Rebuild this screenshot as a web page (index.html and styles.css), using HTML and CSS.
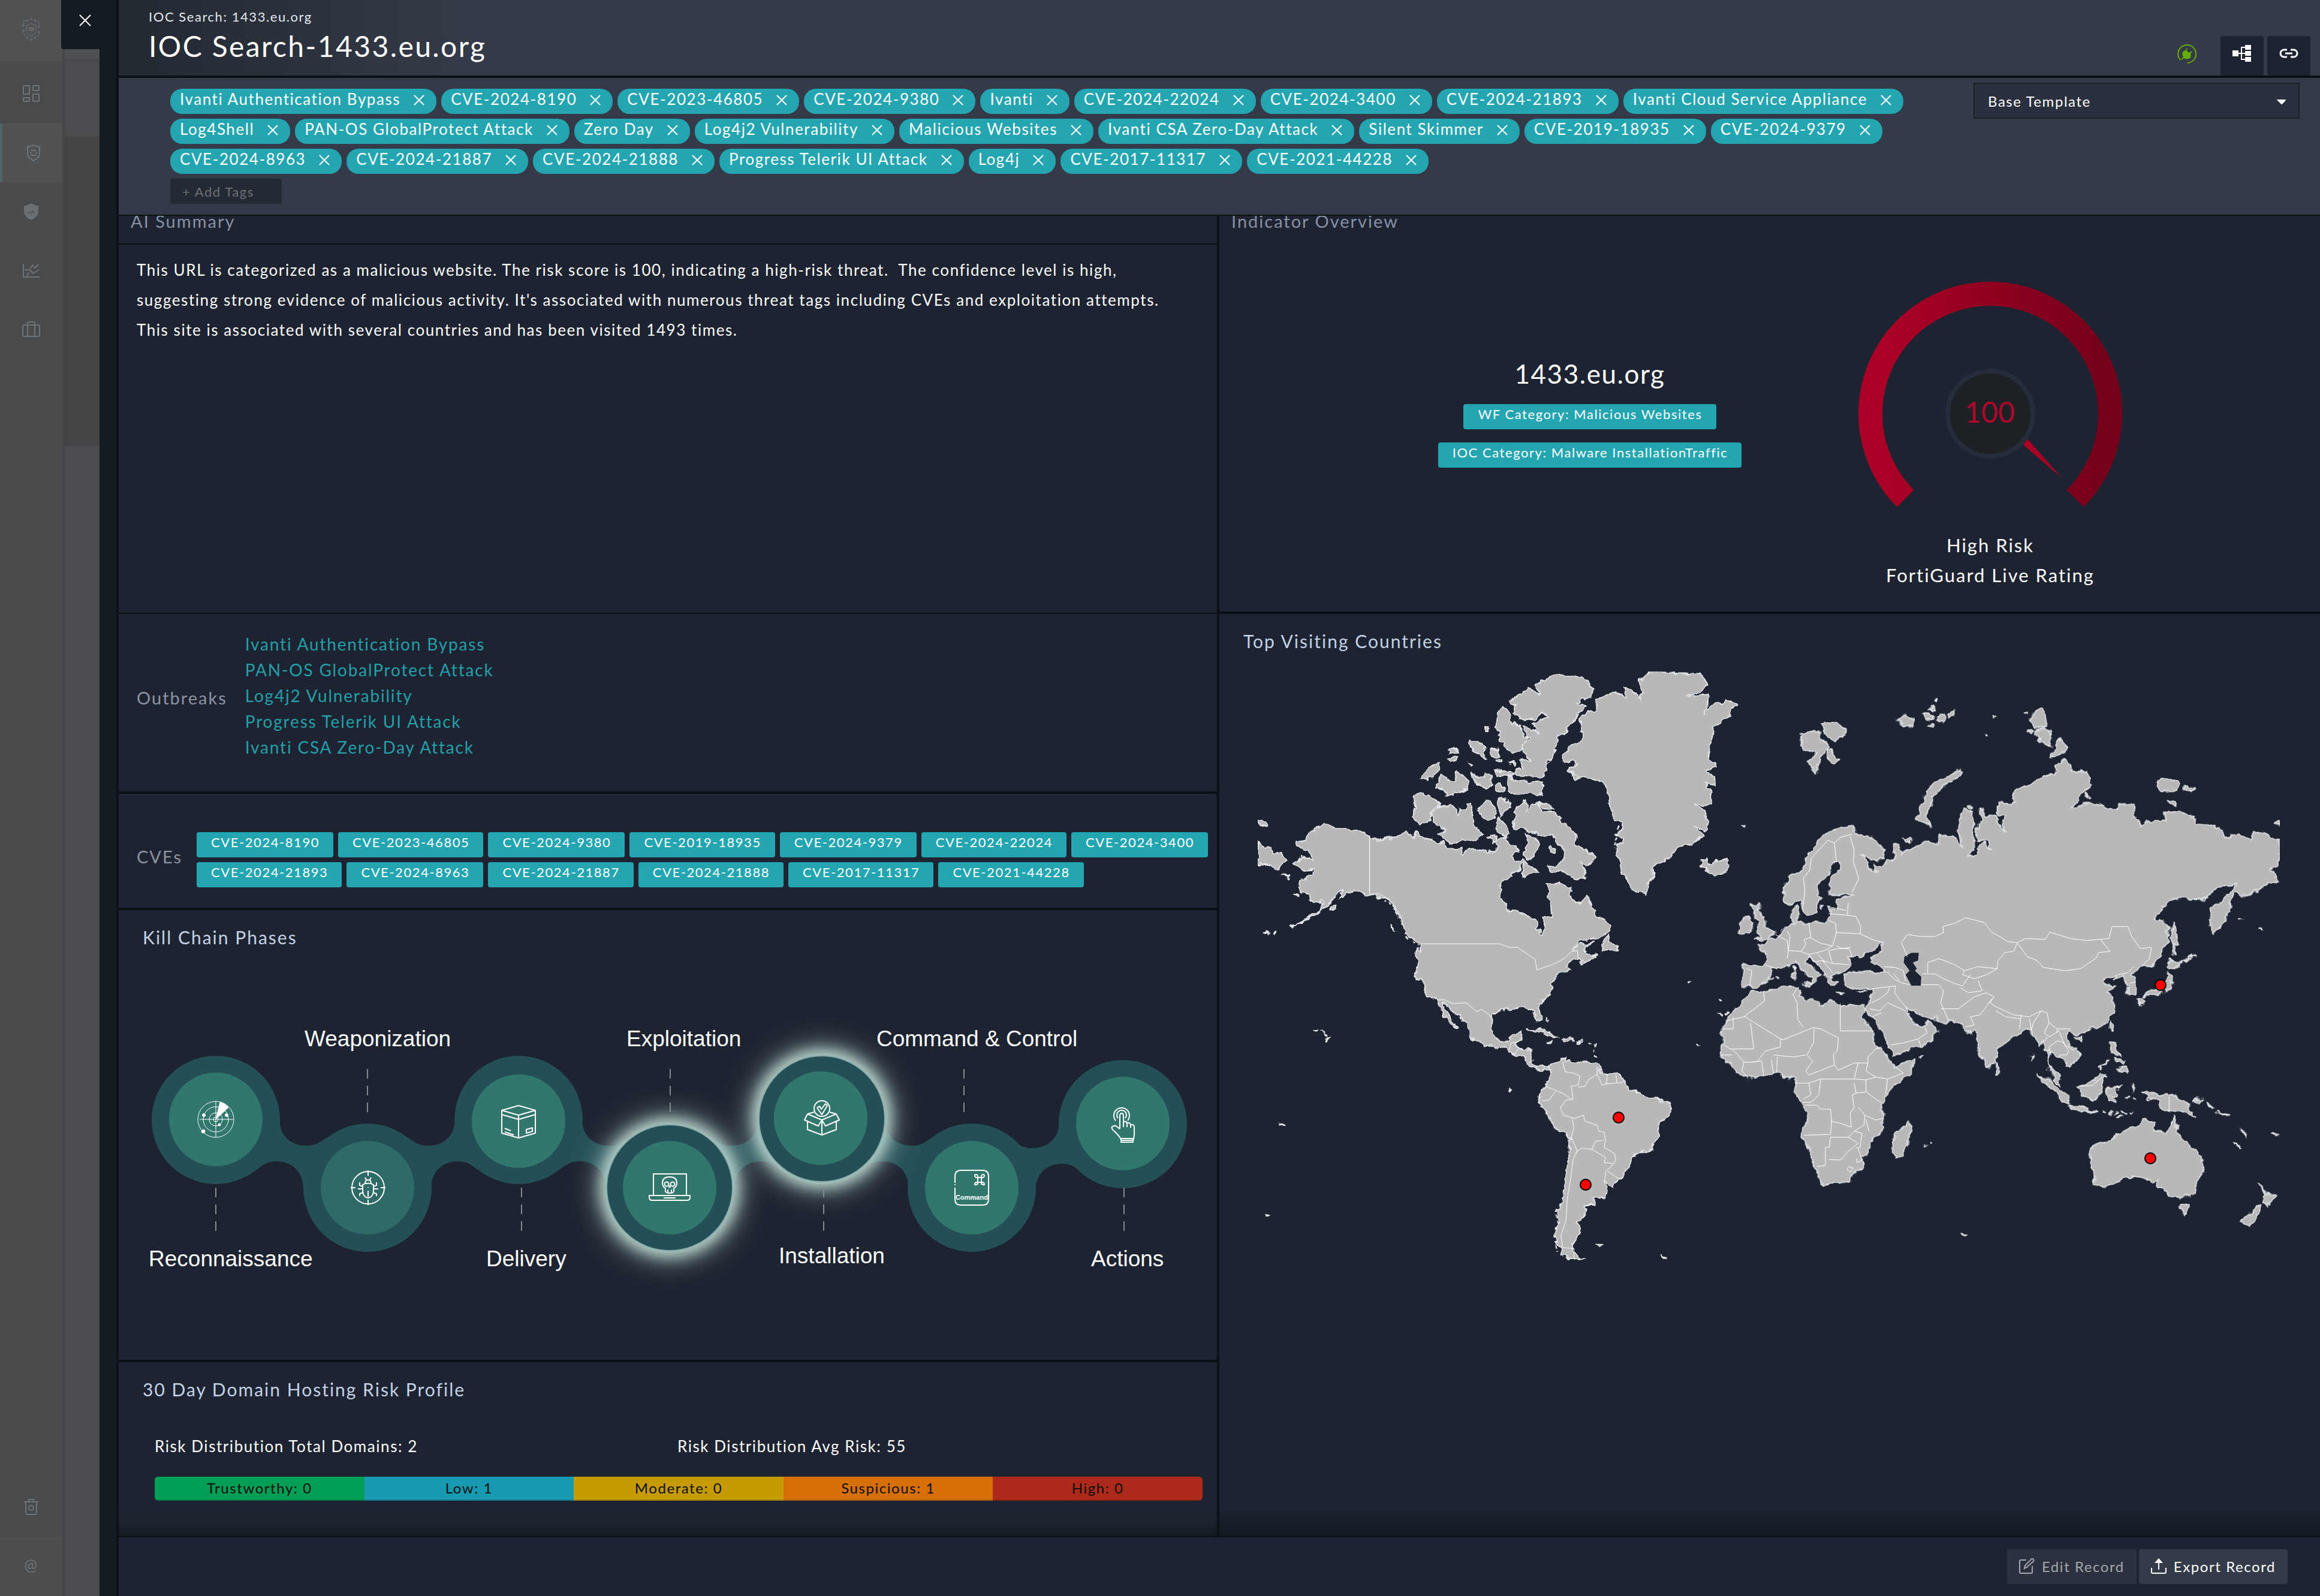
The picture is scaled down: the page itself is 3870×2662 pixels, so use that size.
FILE: index.html
```html
<!DOCTYPE html>
<html lang="en">
<head>
<meta charset="utf-8">
<title>IOC Search: 1433.eu.org</title>
<link rel="stylesheet" href="styles.css">
</head>
<body>
<div class="app">
  <nav class="rail" aria-label="Main">
    <a class="rail-item rail-logo" href="#" aria-label="Home">
      <svg class="rail-icon" viewBox="0 0 30 38"><path d="M15 9c3 2 5 2.600 8 3v9c0 4-3 7-8 9-5-2-8-5-8-9v-9c3-.4 5-1 8-3z"/><path d="M2 11V6l7-2M21 4l7 2v8M2 22c1 6 3 9 7 11M28 24c-1 5-3 7-7 9M11 16h8v5h-8zM11 18.500h8M13.500 16v5M16.500 16v5"/><g class="dots"><circle cx="15" cy="1.800" r="1.800"/><circle cx="9" cy="4" r="1.800"/><circle cx="21" cy="4" r="1.800"/><circle cx="2" cy="13" r="1.800"/><circle cx="2" cy="21" r="1.800"/><circle cx="28" cy="15" r="1.800"/><circle cx="28" cy="24" r="1.800"/><circle cx="9" cy="33" r="1.800"/><circle cx="21" cy="33" r="1.800"/><circle cx="15" cy="36" r="1.800"/></g></svg>
    </a>
    <a class="rail-item" href="#" aria-label="Dashboard">
      <svg class="rail-icon" viewBox="0 0 30 30"><g class="wide"><rect x="2" y="2" width="10" height="14" rx="1"/><rect x="18" y="2" width="10" height="8" rx="1"/><rect x="2" y="22" width="10" height="6" rx="1"/><rect x="18" y="16" width="10" height="12" rx="1"/></g></svg>
    </a>
    <a class="rail-item rail-active" href="#" aria-label="Threat intelligence">
      <svg class="rail-icon" viewBox="0 0 30 30"><path class="wide" d="M15 2c4 2 6 2.600 10 3v11c0 6-4 9-10 12C9 25 5 22 5 16V5c4-.4 6-1 10-3z"/><path class="wide" d="M10 11h3M17 11h3M9 15h3M18 15h3M10 19h3M17 19h3M13 11h4M13 19h4"/></svg>
    </a>
    <a class="rail-item" href="#" aria-label="Incidents">
      <svg class="rail-icon" viewBox="0 0 30 30"><path class="solid" d="M15 1c4 2.500 8 3.500 12 4v9c0 7-5 12-12 15C8 26 3 21 3 14V5c4-.5 8-1.500 12-4z"/><path class="pulse" d="M8 17h4l1.500-2 2 5 2-7 2 4H22"/></svg>
    </a>
    <a class="rail-item" href="#" aria-label="Reports">
      <svg class="rail-icon" viewBox="0 0 30 30"><path class="wide" d="M2 4v22h27M4 14h9l5 6 10-6M13 12l4-6 4 5 6-6M8 24l3-6"/></svg>
    </a>
    <a class="rail-item" href="#" aria-label="Resources">
      <svg class="rail-icon" viewBox="0 0 30 30"><g class="wide"><rect x="1" y="8" width="28" height="19" rx="2"/><path d="M9 27V5q0-2 2-2h8q2 0 2 2v22"/></g></svg>
    </a>
    <div class="rail-space"></div>
    <a class="rail-item" href="#" aria-label="Recycle bin">
      <svg class="rail-icon" viewBox="0 0 30 30"><g class="wide"><path d="M3 7h24M11 7V3h8v4M6 7v18q0 3 3 3h12q3 0 3-3V7"/><circle cx="15" cy="17" r="4"/></g></svg>
    </a>
    <a class="rail-item rail-last" href="#" aria-label="Help">@</a>
  </nav>
  <div class="under"><div class="under-top"></div><div class="under-bar"></div><div class="under-body"></div></div>

  <div class="drawer">
    <button class="close" type="button" aria-label="Close"><svg viewBox="0 0 20 20"><path d="M1 1l18 18M19 1L1 19"/></svg></button>
    <main class="record">
      <header class="head">
        <div class="head-text">
          <p class="crumb">IOC Search: 1433.eu.org</p>
          <h1 class="title">IOC Search-1433.eu.org</h1>
        </div>
        <div class="head-tools">
          <svg class="plug" viewBox="0 0 32 32"><path class="ring" d="M5 26A15 15 0 1 1 17 31"/><path class="body" d="M6 25l4-4c-3-5-2-9 3-11l3-4 1 1-2 3 5 4 4-3 1 1-3 4c2 5-1 9-6 8-2 1-4 0-5-1l-4 3z"/></svg>
          <button class="tool" type="button" aria-label="Relationships"><svg viewBox="0 0 32 28"><path class="fill" d="M0 9h10v10H0zM21 0h10v8H21zM21 10h10v8H21zM21 20h10v8H21z"/><path d="M10 14h12M15 4v20M14 4h8M14 24h8"/></svg></button>
          <button class="tool" type="button" aria-label="Copy link"><svg viewBox="0 0 32 28"><path class="thick" d="M13 8H8a6 6 0 0 0 0 12h5M19 8h5a6 6 0 0 1 0 12h-5M10 14h12"/></svg></button>
        </div>
      </header>

      <section class="tagbar">
        <div class="tag-area">
          <div class="tags">
          <span class="tag">Ivanti Authentication Bypass<button type="button" aria-label="Remove"><svg viewBox="0 0 18 18"><path d="M1 1l16 16M17 1L1 17"/></svg></button></span>
          <span class="tag">CVE-2024-8190<button type="button" aria-label="Remove"><svg viewBox="0 0 18 18"><path d="M1 1l16 16M17 1L1 17"/></svg></button></span>
          <span class="tag">CVE-2023-46805<button type="button" aria-label="Remove"><svg viewBox="0 0 18 18"><path d="M1 1l16 16M17 1L1 17"/></svg></button></span>
          <span class="tag">CVE-2024-9380<button type="button" aria-label="Remove"><svg viewBox="0 0 18 18"><path d="M1 1l16 16M17 1L1 17"/></svg></button></span>
          <span class="tag">Ivanti<button type="button" aria-label="Remove"><svg viewBox="0 0 18 18"><path d="M1 1l16 16M17 1L1 17"/></svg></button></span>
          <span class="tag">CVE-2024-22024<button type="button" aria-label="Remove"><svg viewBox="0 0 18 18"><path d="M1 1l16 16M17 1L1 17"/></svg></button></span>
          <span class="tag">CVE-2024-3400<button type="button" aria-label="Remove"><svg viewBox="0 0 18 18"><path d="M1 1l16 16M17 1L1 17"/></svg></button></span>
          <span class="tag">CVE-2024-21893<button type="button" aria-label="Remove"><svg viewBox="0 0 18 18"><path d="M1 1l16 16M17 1L1 17"/></svg></button></span>
          <span class="tag">Ivanti Cloud Service Appliance<button type="button" aria-label="Remove"><svg viewBox="0 0 18 18"><path d="M1 1l16 16M17 1L1 17"/></svg></button></span>
          <span class="tag">Log4Shell<button type="button" aria-label="Remove"><svg viewBox="0 0 18 18"><path d="M1 1l16 16M17 1L1 17"/></svg></button></span>
          <span class="tag">PAN-OS GlobalProtect Attack<button type="button" aria-label="Remove"><svg viewBox="0 0 18 18"><path d="M1 1l16 16M17 1L1 17"/></svg></button></span>
          <span class="tag">Zero Day<button type="button" aria-label="Remove"><svg viewBox="0 0 18 18"><path d="M1 1l16 16M17 1L1 17"/></svg></button></span>
          <span class="tag">Log4j2 Vulnerability<button type="button" aria-label="Remove"><svg viewBox="0 0 18 18"><path d="M1 1l16 16M17 1L1 17"/></svg></button></span>
          <span class="tag">Malicious Websites<button type="button" aria-label="Remove"><svg viewBox="0 0 18 18"><path d="M1 1l16 16M17 1L1 17"/></svg></button></span>
          <span class="tag">Ivanti CSA Zero-Day Attack<button type="button" aria-label="Remove"><svg viewBox="0 0 18 18"><path d="M1 1l16 16M17 1L1 17"/></svg></button></span>
          <span class="tag">Silent Skimmer<button type="button" aria-label="Remove"><svg viewBox="0 0 18 18"><path d="M1 1l16 16M17 1L1 17"/></svg></button></span>
          <span class="tag">CVE-2019-18935<button type="button" aria-label="Remove"><svg viewBox="0 0 18 18"><path d="M1 1l16 16M17 1L1 17"/></svg></button></span>
          <span class="tag">CVE-2024-9379<button type="button" aria-label="Remove"><svg viewBox="0 0 18 18"><path d="M1 1l16 16M17 1L1 17"/></svg></button></span>
          <span class="tag">CVE-2024-8963<button type="button" aria-label="Remove"><svg viewBox="0 0 18 18"><path d="M1 1l16 16M17 1L1 17"/></svg></button></span>
          <span class="tag">CVE-2024-21887<button type="button" aria-label="Remove"><svg viewBox="0 0 18 18"><path d="M1 1l16 16M17 1L1 17"/></svg></button></span>
          <span class="tag">CVE-2024-21888<button type="button" aria-label="Remove"><svg viewBox="0 0 18 18"><path d="M1 1l16 16M17 1L1 17"/></svg></button></span>
          <span class="tag">Progress Telerik UI Attack<button type="button" aria-label="Remove"><svg viewBox="0 0 18 18"><path d="M1 1l16 16M17 1L1 17"/></svg></button></span>
          <span class="tag">Log4j<button type="button" aria-label="Remove"><svg viewBox="0 0 18 18"><path d="M1 1l16 16M17 1L1 17"/></svg></button></span>
          <span class="tag">CVE-2017-11317<button type="button" aria-label="Remove"><svg viewBox="0 0 18 18"><path d="M1 1l16 16M17 1L1 17"/></svg></button></span>
          <span class="tag">CVE-2021-44228<button type="button" aria-label="Remove"><svg viewBox="0 0 18 18"><path d="M1 1l16 16M17 1L1 17"/></svg></button></span>
          </div>
          <input class="add-tag" type="text" placeholder="+ Add Tags" aria-label="Add tags">
        </div>
        <div class="template">
          <select class="template-select" aria-label="Template"><option>Base Template</option></select>
        </div>
      </section>

      <div class="content">
        <div class="col col-left">
          <section class="panel summary">
            <h2 class="panel-head">AI Summary</h2>
            <p class="summary-text">This URL is categorized as a malicious website. The risk score is 100, indicating a high-risk threat.&nbsp; The confidence level is high, suggesting strong evidence of malicious activity. It's associated with numerous threat tags including CVEs and exploitation attempts. This site is associated with several countries and has been visited 1493 times.</p>
          </section>
          <section class="panel outbreaks">
            <h2 class="field-label">Outbreaks</h2>
            <ul class="links">
              <li><a href="#">Ivanti Authentication Bypass</a></li>
              <li><a href="#">PAN-OS GlobalProtect Attack</a></li>
              <li><a href="#">Log4j2 Vulnerability</a></li>
              <li><a href="#">Progress Telerik UI Attack</a></li>
              <li><a href="#">Ivanti CSA Zero-Day Attack</a></li>
            </ul>
          </section>
          <section class="panel cves">
            <h2 class="field-label">CVEs</h2>
            <div class="badges">
              <span class="badge">CVE-2024-8190</span><span class="badge">CVE-2023-46805</span><span class="badge">CVE-2024-9380</span><span class="badge">CVE-2019-18935</span><span class="badge">CVE-2024-9379</span><span class="badge">CVE-2024-22024</span><span class="badge">CVE-2024-3400</span><span class="badge">CVE-2024-21893</span><span class="badge">CVE-2024-8963</span><span class="badge">CVE-2024-21887</span><span class="badge">CVE-2024-21888</span><span class="badge">CVE-2017-11317</span><span class="badge">CVE-2021-44228</span>
            </div>
          </section>
          <section class="panel chain">
            <h2 class="section-title">Kill Chain Phases</h2>
            <svg class="chain-art" viewBox="198 1614 1832 654">
              <defs>
                <filter id="far" x="-60%" y="-60%" width="220%" height="220%"><feGaussianBlur stdDeviation="26"/></filter>
                <filter id="near" x="-40%" y="-40%" width="180%" height="180%"><feGaussianBlur stdDeviation="11"/></filter>
                <path id="joint" d="M106 0C107 26 124 43 152 43C170 43 178 32 185 30L253 60L146 113C145 87 128 69 101 69C86 69 77 76 68 83L0 60Z"/>
              </defs>
              <g class="outer">
                <circle cx="360" cy="1868" r="107"/><circle cx="613" cy="1981" r="107"/><circle cx="865" cy="1868" r="107"/><circle cx="1621" cy="1981" r="107"/><circle cx="1873" cy="1875" r="107"/>
                <circle cx="1117" cy="1981" r="107"/><circle cx="1371" cy="1868" r="107"/>
                <use href="#joint" x="360" y="1868"/><use href="#joint" transform="translate(865 1868) scale(-1 1)"/>
                <use href="#joint" x="865" y="1868"/><use href="#joint" transform="translate(1371 1868) scale(-1 1)"/>
                <use href="#joint" x="1370" y="1868"/><use href="#joint" transform="translate(1873 1872) scale(-1 1)"/>
              </g>
              <g class="glow">
                <circle cx="1117" cy="1981" r="112" filter="url(#far)"/><circle cx="1371" cy="1866" r="112" filter="url(#far)"/>
                <circle cx="1117" cy="1981" r="113" filter="url(#near)"/><circle cx="1371" cy="1866" r="113" filter="url(#near)"/>
              </g>
              <g class="outer lit"><circle cx="1117" cy="1981" r="105"/><circle cx="1371" cy="1866" r="105"/></g>
              <g class="inner">
                <circle cx="360" cy="1867" r="78"/><circle class="dim" cx="613" cy="1981" r="78"/><circle cx="865" cy="1870" r="78"/><circle cx="1117" cy="1981" r="78"/><circle cx="1369" cy="1865" r="78"/><circle cx="1621" cy="1981" r="78"/><circle cx="1873" cy="1874" r="78"/>
              </g>
              <g class="dash"><path d="M613 1783v72M1118 1783v72M1608 1783v72M360 1981v72M870 1981v72M1374 1981v72M1875 1981v72"/></g>
              <g class="art-icon thin" transform="translate(360 1867)"><circle r="30"/><circle r="21"/><circle r="11"/><circle r="4"/><path d="M-27 0H29M0-30V30"/><path class="solid" d="M0 0L7-29Q15-26 21-20Z"/><g class="solid"><circle cx="-20" cy="-7" r="2.500"/><circle cx="18" cy="-7" r="2.500"/><circle cx="-21" cy="20" r="3"/><circle cx="6" cy="9" r="2"/></g></g>
              <g class="art-icon" transform="translate(614 1981)"><circle r="27"/><path d="M0-29v9M0 29v-9M-29 0h8M29 0h-8"/><path d="M-9-5q9-5 18 0v11q-1 10-9 11q-8-1-9-11zM-5-7q0-6 5-6t5 6M-3-13l-2-4M3-13l2-4M0-1v1M0 5v10M-9 2h-8M9 2h8M-9-2l-5-2v-5M9-2l5-2v-5M-8 8l-6 2v4M8 8l6 2v4"/></g>
              <g class="art-icon" transform="translate(865 1870)"><path d="M-28-18L0-26 28-18V20L0 28-28 20ZM-28-18L0-10 28-18M-28-11L0-3 28-11M0-10V28M-23 12l10 4M-23 18l15 5M13 14l10-3v6l-10 3z"/></g>
              <g class="art-icon" transform="translate(1117 1981)"><path d="M-27 12V-23H28V12M-34 13H34V16q0 5-5 5H-29q-5 0-5-5zM-10 17H10"/><path d="M-7 1q-5-3-5-9 0-10 12-10t12 10q0 6-5 9v5q-1 3-7 3t-7-3zM-3 3v6M3 3v6M-1-1l1-2 1 2z"/><circle cx="-5" cy="-6" r="3.500"/><circle cx="5" cy="-6" r="3.500"/></g>
              <g class="art-icon" transform="translate(1371 1865)"><circle cy="-16" r="13"/><path d="M-8-17l4-3 3 5 7-9 3 3-9 15z"/><path d="M-24-7L-13-10M24-7L13-10M-24-7L0 3 24-7M-24-7l-5 10 23 10 6-10 6 10 23-10-5-10M-24 6v13L0 28 24 19V6M0 3v25"/></g>
              <g class="art-icon" transform="translate(1621 1981)"><path d="M-28-8V-19q0-10 10-10H18q10 0 10 10V19q0 10-10 10H-18q-10 0-10-10V0M-28-6v2"/><path d="M10-17h6v8h-6zM10-17h-3q-2-1-2-3t2-2 3 2zM16-17h3q2-1 2-3t-2-2-3 2zM10-9h-3q-2 1-2 3t2 1 3-1zM16-9h3q2 1 2 3t-2 1-3-1z"/><text class="key-text" x="0" y="20" text-anchor="middle">Command</text></g>
              <g class="art-icon" transform="translate(1871 1875)"><path d="M-10-6a13 13 0 1 1 20 0M-6-10a8 8 0 1 1 12 0"/><path d="M-3 8V-14q0-4 3-4t3 4V-3M3 5V-4q5-2 6 3V5M9 5V-2q6-1 6 4V6M15 1q6-1 6 4V17q0 6-2 10H0Q-5 18-12 12-19 6-15 4-12 1-8 4l5 4M-1 24H19v6H-1z"/></g>
              <g class="art-label">
                <text x="248" y="2112">Reconnaissance</text><text x="508" y="1745">Weaponization</text><text x="811" y="2112">Delivery</text><text x="1045" y="1745">Exploitation</text><text x="1299" y="2107">Installation</text><text x="1462" y="1745">Command &amp; Control</text><text x="1820" y="2112">Actions</text>
              </g>
            </svg>
          </section>
          <section class="panel risk">
            <h2 class="section-title">30 Day Domain Hosting Risk Profile</h2>
            <div class="risk-facts"><p>Risk Distribution Total Domains: 2</p><p>Risk Distribution Avg Risk: 55</p></div>
            <div class="risk-bar"><span class="seg trust">Trustworthy: 0</span><span class="seg low">Low: 1</span><span class="seg moderate">Moderate: 0</span><span class="seg suspicious">Suspicious: 1</span><span class="seg high">High: 0</span></div>
          </section>
        </div>

        <div class="col col-right">
          <section class="panel overview">
            <h2 class="panel-head">Indicator Overview</h2>
            <div class="overview-body">
              <div class="indicator">
                <p class="indicator-name">1433.eu.org</p>
                <span class="badge">WF Category: Malicious Websites</span>
                <span class="badge">IOC Category: Malware InstallationTraffic</span>
              </div>
              <div class="rating">
                <svg class="gauge" viewBox="-220 -220 440 380">
                  <defs><linearGradient id="red" gradientUnits="userSpaceOnUse" x1="-220" y1="0" x2="220" y2="0"><stop offset=".1" stop-color="#ab0026"/><stop offset=".9" stop-color="#76001b"/></linearGradient></defs>
                  <path fill="url(#red)" d="M-155.500 155.500A220 220 0 1 1 155.500 155.500L127.300 127.300A180 180 0 1 0-127.300 127.300Z"/>
                  <path class="needle" d="M62 42L119 107 54 51Z"/>
                  <circle class="hub" r="71"/>
                  <text class="score" x="-1" y="15" text-anchor="middle">100</text>
                </svg>
                <p class="rating-text">High Risk</p>
                <p class="rating-text">FortiGuard Live Rating</p>
              </div>
            </div>
          </section>
          <section class="panel countries">
            <h2 class="section-title">Top Visiting Countries</h2>
            <svg class="map" viewBox="2072 1100 1760 1040">
              <defs>
                <filter id="coast" x="0" y="0" width="100%" height="100%"><feTurbulence type="fractalNoise" baseFrequency=".06" numOctaves="3" seed="4"/><feDisplacementMap in="SourceGraphic" scale="14" xChannelSelector="R" yChannelSelector="G"/></filter>
              </defs>
              <g class="land" filter="url(#coast)">
                <g transform="translate(2069 1090) scale(.574 .6696)">
                  <path d="M163 469L185 466 205 443 235 432 246 423 262 431 300 436 345 444 374 453 390 458 415 468 440 455 470 449 485 439 492 453 505 456 512 446 520 456 545 462 560 466 590 470 600 484 620 487 640 487 648 502 660 487 680 486 700 492 735 490 745 492 750 478 742 470 750 462 765 455 775 462 782 472 800 478 810 490 800 500 795 515 815 522 820 512 830 520 815 530 808 543 790 548 788 555 770 565 758 585 755 610 770 620 773 638 800 640 825 652 857 660 860 685 870 690 880 700 888 692 885 670 882 660 898 652 905 640 903 620 892 605 898 590 892 570 910 572 930 568 942 578 960 585 965 610 975 618 988 622 1003 598 1015 615 1030 640 1040 658 1060 668 1076 680 1077 692 1060 700 1040 710 1000 712 985 716 965 735 985 725 1005 722 1028 718 1002 732 1005 748 1020 752 1040 750 1020 760 995 773 992 765 985 760 960 770 950 780 960 785 945 795 925 798 915 812 905 820 912 830 905 845 885 858 865 870 865 880 875 900 875 915 868 917 855 900 850 885 838 888 820 882 795 883 780 886 755 888 738 897 733 912 731 935 740 955 757 966 780 964 790 948 820 944 815 965 803 972 808 983 830 982 850 988 848 1010 850 1020 862 1030 880 1025 898 1030 900 1040 885 1032 870 1038 850 1030 835 1020 820 1005 800 998 780 990 765 980 742 983 715 975 690 968 668 955 668 940 650 920 630 900 610 885 595 875 590 874 597 890 612 905 622 920 632 932 625 930 605 912 590 900 582 885 572 864 545 852 540 845 530 825 515 810 510 795 515 770 512 735 527 740 520 725 500 712 480 700 478 690 465 675 462 655 450 640 435 615 415 605 400 612 385 598 374 600 350 598 325 592 305 595 288 610 285 600 295 588 275 600 260 620 240 640 215 655 185 668 148 682 205 655 235 640 240 618 205 615 200 600 180 595 168 580 175 565 210 550 210 540 190 538 152 522 180 508 210 512 195 490 165 478Z"/>
                  <path d="M898 1030L912 1020 935 1012 948 1006 945 1018 955 1012 975 1018 1010 1018 1035 1022 1040 1032 1060 1046 1090 1048 1112 1058 1122 1078 1130 1086 1165 1095 1170 1104 1205 1105 1230 1115 1248 1122 1249 1138 1230 1160 1215 1172 1215 1195 1210 1215 1198 1235 1165 1242 1140 1252 1135 1272 1120 1290 1095 1315 1085 1326 1055 1320 1068 1340 1060 1352 1022 1357 1022 1374 1000 1374 1008 1388 998 1405 980 1415 993 1432 985 1445 968 1462 970 1480 968 1490 985 1505 1008 1508 960 1510 930 1500 935 1485 920 1470 915 1440 925 1410 928 1370 935 1345 945 1320 948 1280 955 1250 957 1210 940 1197 912 1182 895 1155 880 1135 866 1118 870 1095 885 1078 898 1062 898 1040Z"/>
                  <path d="M935 248L965 230 995 220 1000 192 982 182 985 162 1010 143 1032 140 1032 115 1060 102 1090 94 1110 102 1125 110 1115 85 1140 92 1160 112 1168 95 1155 65 1185 45 1330 50 1358 78 1340 97 1295 103 1340 108 1360 104 1358 130 1346 152 1370 128 1395 128 1408 115 1442 130 1415 155 1400 172 1370 185 1378 200 1372 225 1363 240 1360 262 1378 270 1385 285 1355 292 1378 305 1380 330 1355 325 1365 345 1368 372 1325 378 1350 388 1357 410 1357 437 1315 432 1340 445 1350 450 1310 475 1272 480 1255 505 1225 520 1200 528 1195 555 1185 580 1180 602 1145 592 1125 565 1110 545 1105 520 1095 500 1095 480 1115 470 1115 455 1090 450 1110 440 1110 425 1085 415 1078 395 1075 360 1055 325 1020 308 975 312 950 290 985 272 945 270Z"/>
                  <path d="M782 120L820 95 838 86 870 105 860 85 880 65 910 55 960 52 1000 60 1030 90 1020 105 975 125 1000 130 960 175 940 200 922 210 918 240 905 258 890 270 890 295 870 307 800 303 795 290 820 282 812 265 845 270 820 245 822 228 845 212 826 205 824 182 865 196 848 176 895 158 885 150 850 165 810 160 792 145 800 130ZM765 135L785 150 788 167 815 181 817 200 835 212 815 245 790 250 765 232 770 220 745 208 752 195 740 185 748 150ZM775 306L800 315 820 320 880 322 880 345 860 352 800 350 780 345ZM740 287L760 292 795 302 780 309 750 304ZM742 330L752 325 765 335 765 347 742 345ZM668 213L690 218 715 235 713 262 690 245 672 240ZM727 232L750 238 752 258 735 260ZM570 320L590 303 605 315 622 320 630 295 645 300 665 320 660 338 630 345 600 352 595 340 570 335ZM525 310L545 285 582 272 580 290 560 305 540 315ZM605 240L630 234 634 246 610 248ZM603 262L630 256 628 270 608 275ZM742 265L765 265 765 272 745 272ZM663 266L674 278 670 280ZM675 300L700 312 705 298 730 298 732 330 715 337 690 322ZM510 352L545 350 582 375 560 390 550 415 522 425 500 405 512 380ZM555 400L580 380 605 380 625 390 635 405 640 385 655 390 660 372 673 375 672 400 680 430 705 450 690 460 655 468 610 473 575 450 600 440 570 430ZM690 390L705 378 710 368 733 365 740 390 738 405 720 418 705 405ZM750 362L788 365 785 380 755 408ZM745 410L765 415 780 445 765 455 745 445ZM720 455L735 450 748 470 735 475ZM797 400L805 380 820 368 835 370 832 395 845 375 870 372 875 395 900 395 930 412 960 430 978 450 975 480 1000 485 1028 508 1012 530 990 515 1003 548 1000 565 970 560 950 545 900 540 895 528 920 530 940 505 930 480 900 455 865 445 835 440 800 435ZM870 370L895 372 908 390 880 386ZM832 450L860 455 866 480 850 505 835 515 822 500 835 475ZM825 520L850 535 870 548 840 545 828 556 818 545ZM900 480L918 482 912 495 900 493ZM712 185L720 186 720 195 713 194ZM785 268L795 270 793 278ZM1075 700L1070 718 1090 725 1100 745 1075 738 1048 738 1060 712Z"/>
                  <path d="M836 938L870 935 900 945 925 955 900 955 870 942ZM932 960L955 956 970 965 935 967ZM890 965L908 965 906 970 892 970ZM980 965L995 965 995 969 981 969ZM1338 520L1355 512 1360 522 1395 514 1415 512 1423 530 1400 548 1378 555 1348 545 1358 535 1340 530ZM52 467L85 483 95 500 115 500 135 515 120 525 110 540 85 525 60 520 52 528ZM52 417L72 420 72 427 52 429ZM118 552L144 558 140 562ZM156 597L170 598 168 604ZM67 694L78 694 78 697ZM92 692L102 690 98 695ZM219 939L226 941 222 943ZM232 943L250 950 244 950ZM250 955L260 958 253 962ZM1035 1475L1060 1470 1050 1480ZM1226 1499L1240 1508 1232 1508ZM782 1086L790 1088 786 1092ZM260 632L280 626 275 636 262 637ZM438 672L455 692 444 684ZM890 908L893 913 895 920ZM112 1173L128 1178 124 1180ZM78 1398L84 1400 80 1403ZM1300 816L1306 818 1302 820ZM1393 862L1398 863 1396 865ZM1388 896L1400 897 1396 900ZM1410 895L1424 893 1416 899Z"/>
                  <path class="rough" d="M1027 970l5 20 2 15M1012 968l8 2M400 606l50 30 10 22M480 708l42 24M1098 430l-10 60M925 1370l-12 80 8 40M1325 970l8 6"/>
                </g>
                <g transform="translate(2839 1090) scale(.6569 .6696)">
                  <path d="M103 828L107 800 103 775 130 774 160 776 165 755 160 740 137 728 160 725 165 712 185 712 200 695 218 680 235 672 228 655 230 638 245 630 246 650 240 668 255 672 275 672 300 668 318 666 325 650 322 635 340 640 345 630 340 612 375 605 385 600 355 600 328 598 322 575 335 550 350 540 352 525 340 520 328 530 325 545 298 565 292 590 302 605 292 625 285 650 268 655 255 630 250 615 232 625 210 618 206 575 230 558 250 548 262 515 280 485 295 465 320 448 345 434 380 430 395 450 430 458 465 490 462 512 435 515 405 500 420 520 425 540 445 545 440 525 460 530 470 515 490 510 485 478 500 480 503 500 520 490 550 480 580 470 600 470 605 450 640 460 665 482 650 440 655 415 668 390 690 390 692 420 692 460 695 480 672 505 690 508 705 480 715 470 730 488 730 468 700 465 700 430 710 410 705 385 720 405 745 400 755 420 770 440 765 420 770 408 750 400 750 375 800 372 790 350 800 338 840 318 865 310 895 305 900 280 920 265 935 280 940 295 975 295 990 320 975 345 935 385 985 370 1020 375 1030 385 1055 388 1060 372 1095 378 1100 405 1115 430 1125 415 1180 420 1175 395 1210 395 1250 410 1260 425 1300 428 1325 445 1330 462 1340 455 1380 455 1395 465 1400 448 1440 450 1466 465 1466 530 1440 535 1455 550 1462 568 1440 570 1395 600 1355 600 1340 620 1345 640 1320 675 1298 703 1290 670 1295 635 1330 605 1350 590 1357 568 1335 580 1310 580 1285 600 1280 612 1195 610 1170 635 1148 662 1175 672 1185 680 1183 720 1165 755 1140 775 1115 780 1100 795 1090 800 1102 820 1100 848 1080 850 1082 825 1070 815 1072 800 1045 812 1050 798 1030 805 1018 815 1025 825 1052 825 1040 835 1030 845 1045 870 1047 890 1030 920 1000 935 965 942 955 950 945 945 935 940 925 955 930 970 950 985 957 1000 955 1012 928 1028 920 1015 905 1005 895 992 885 990 880 1020 890 1040 905 1048 915 1075 895 1065 880 1030 878 990 870 965 855 980 848 960 835 938 830 935 805 948 770 970 748 985 745 1020 728 1033 705 995 692 940 680 948 665 930 655 918 610 915 575 905 545 897 518 882 525 902 540 925 560 925 575 915 600 940 580 965 485 1005 478 985 460 950 430 905 416 885 425 870 430 845 430 835 410 838 365 830 360 802 385 795 420 790 440 797 470 793 465 782 430 765 440 752 457 740 455 720 425 745 400 755 390 748 372 757 375 772 368 790 345 798 330 805 345 820 325 825 310 795 295 775 270 758 262 768 290 790 305 803 292 805 280 825 278 805 255 785 240 765 220 780 178 783 175 795 165 820 140 832 125 832Z"/>
                  <path d="M130 840L150 845 200 832 245 830 245 850 265 862 300 868 315 882 325 865 350 872 395 878 412 876 414 886 408 898 430 940 440 970 460 1000 476 1012 488 1030 515 1018 538 1010 525 1045 470 1100 455 1125 463 1160 463 1185 425 1215 425 1245 408 1255 405 1280 375 1312 345 1320 310 1325 300 1310 275 1245 258 1205 255 1195 268 1160 260 1125 235 1095 240 1065 235 1055 215 1058 195 1045 155 1052 115 1057 85 1040 65 1018 50 1005 48 990 55 970 47 945 60 915 85 890 98 865 125 840Z"/>
                  <path d="M525 1165L533 1185 510 1250 495 1255 482 1240 490 1195 515 1180ZM130 620L150 622 142 640 160 660 165 682 182 690 175 708 135 714 150 702 138 690 148 672 132 655 136 640ZM97 670L105 660 122 658 128 672 122 695 97 698ZM248 197L300 195 302 215 322 230 310 250 300 262 292 297 270 270 292 250 260 240ZM302 180L335 175 365 185 362 200 340 216 312 200ZM318 238L330 240 348 265 332 278 320 262ZM497 165L520 155 540 160 538 175 515 185ZM562 152L575 148 592 155 590 165 565 162ZM575 140L588 128 590 138ZM600 155L615 150 615 168 598 170ZM622 152L640 143 640 158 625 160ZM573 178L590 175 588 185ZM590 113L597 115 596 119ZM655 288L666 296 640 315 610 335 590 355 578 380 570 405 582 435 545 415 560 370 580 330 615 308ZM832 165L845 145 858 138 873 155 870 182 845 185ZM845 190L870 185 890 200 886 230 858 222ZM905 212L928 235 915 250 886 256ZM828 190L840 192 838 200ZM818 142L828 144 826 147ZM1160 315L1175 310 1212 322 1205 340 1180 342 1165 345 1158 330ZM1222 330L1255 340 1245 345 1225 340ZM1182 368L1200 370 1202 380 1188 378ZM1457 425L1466 418 1466 431ZM673 378L685 378 685 384 675 384ZM975 352L985 355 980 360ZM516 460L530 460 528 468 518 468ZM302 628L306 630 302 638ZM1195 668L1202 690 1210 725 1198 720 1203 750 1193 745 1190 690ZM1187 758L1216 772 1205 785 1180 782ZM1182 795L1193 810 1185 840 1160 845 1140 852 1115 855 1140 840 1165 830 1180 812ZM1105 858L1122 862 1110 876ZM1040 918L1048 925 1040 940 1034 932ZM952 957L966 955 960 968ZM748 1020L760 1040 748 1048ZM1038 965L1050 965 1050 990 1060 1002 1038 995ZM1056 1035L1080 1025 1080 1048 1062 1040ZM1048 1008L1072 1012 1070 1022 1052 1018ZM1010 1032L1034 1012 1030 1018ZM955 1078L985 1072 1005 1055 1015 1045 1028 1055 1015 1070 1015 1090 1000 1110 970 1105ZM855 1050L880 1060 910 1085 932 1108 930 1124 905 1105 880 1078ZM928 1128L960 1130 1005 1141 975 1140 935 1135ZM1030 1080L1072 1078 1045 1085 1055 1100 1042 1102 1050 1118 1035 1115 1028 1095ZM1118 1092L1145 1100 1170 1097 1200 1105 1235 1120 1235 1135 1257 1152 1225 1147 1205 1142 1185 1142 1165 1130 1155 1112 1130 1108ZM1240 1113L1270 1108 1258 1122ZM1282 1118L1300 1132 1290 1130ZM1310 1138L1338 1153 1325 1150ZM985 1235L1000 1225 1040 1215 1060 1195 1090 1180 1110 1172 1120 1162 1152 1168 1145 1182 1180 1200 1190 1175 1197 1155 1210 1190 1225 1215 1255 1240 1272 1255 1275 1280 1255 1325 1250 1345 1225 1357 1185 1350 1170 1330 1155 1327 1160 1312 1145 1320 1115 1300 1080 1305 1055 1317 1020 1327 998 1322 1000 1300 985 1255ZM1212 1372L1238 1373 1228 1397 1216 1390ZM1413 1322L1435 1343 1455 1350 1435 1378 1425 1370 1430 1345ZM1405 1380L1422 1378 1390 1425 1370 1418 1385 1400ZM1352 1218L1372 1231 1360 1228ZM1448 1198L1460 1200 1452 1205ZM1370 1185L1378 1190 1380 1208ZM229 795L240 796 238 812 230 812ZM232 782L238 783 236 792ZM260 822L280 821 276 832ZM340 845L360 844 352 848ZM398 846L415 842 405 849ZM172 812L180 808 176 812ZM188 806L196 807 192 810ZM1362 660L1368 664 1364 664ZM1414 683L1420 688 1416 688ZM1216 770L1252 752 1230 766ZM835 1000L839 1000 836 1016ZM553 1004L562 1004 558 1007ZM664 1446L676 1450 668 1455ZM105 428L112 427 108 431ZM1090 1070L1096 1085 1092 1095ZM568 1222L572 1226 568 1226ZM582 1217L586 1219 583 1221ZM738 152L745 154 740 157ZM720 203L726 206 722 208Z"/>
                  <path class="rough" d="M1018 1142l30 2 25-2M1055 1155l20-10 20-3M1080 1105l30 5M1012 1034l22-22"/>
                </g>
              </g>
              <g class="water" transform="translate(2840 1090) scale(.6569 .6696)"><path d="M512 755L530 745 550 745 548 765 535 770 545 785 540 790 556 805 555 828 530 828 515 800 525 790 510 770Z"/></g>
              <g class="borders">
                <g transform="translate(2070 1090) scale(.574 .6696)">
                  <path d="M374 453V598M525 723H752L780 732 805 732 835 750 855 762 860 788 905 775 940 760 960 742 978 740 980 760M374 600L400 598 430 612 462 650M570 863L590 862 615 872 655 870 685 892 700 886 718 898 733 912M780 988L785 970 800 968M808 983L795 998M830 990L848 986M835 1020L852 1012"/>
                  <path d="M935 1015L942 1042 965 1045 985 1052 980 1075 960 1078 965 1110 945 1112 928 1132 938 1150 970 1158 995 1150 1000 1165 1035 1175 1040 1190 1055 1192 1060 1212 1055 1230 1085 1245 1090 1262 1082 1272 1060 1290 1056 1320M885 1078L915 1088 940 1098 962 1112M875 1115L895 1112 915 1090M962 1158L968 1180 960 1205 978 1240 965 1260 958 1310 948 1360 945 1410 930 1450 935 1480 968 1482M970 1245L990 1232 1020 1235 1030 1215 1055 1212M1020 1235L1060 1255 1055 1268 1082 1270M1066 1290L1098 1308M1035 1030L1035 1048 1010 1062 1000 1078 980 1080M1035 1048L1050 1075 1068 1070M1065 1048L1062 1072 1090 1070M1090 1048L1092 1070 1110 1068M968 1482V1508"/>
                </g>
                <g transform="translate(2840 1090) scale(.6569 .6696)">
                  <path d="M255 630L260 590 256 560 272 540 276 510 300 485 318 465 335 472 350 458 380 450M335 472L340 520M375 455L385 490 383 520 397 560 380 595M120 828L125 790 112 785M160 776L190 786M185 700L215 715 218 740 215 760M215 690L222 705 218 740 250 742 262 725 258 712 275 708 270 672M275 708L300 722 330 728 340 695 338 672 320 665M250 742L270 750 290 745 310 740 330 728M270 750L282 768 305 765 318 780 330 795M290 745L310 768M305 765L330 772 372 775M330 772L320 740 345 735 372 735 380 755M338 695L400 698 402 680 390 655 368 652 320 648M368 652L370 620M325 632L365 640M400 698L430 712 458 720M340 728L355 735 375 732M460 780L490 782 510 790 515 815M470 795L488 812 505 820 525 825M485 798L500 815M430 835L490 828 488 845 500 862 520 885M430 870L450 860 470 845 475 832M425 885L450 890 470 870 515 890M430 905L455 895M478 975L510 970 548 960 570 945 565 930M548 962L555 980M520 755L505 720 520 700 555 705 590 705 612 695 610 680 640 672 668 658 715 670 735 695 755 705 775 718 800 720 790 742 768 745 750 765 748 785 700 780 665 790 640 775 600 760 572 770 572 795M558 798L590 798 612 810 640 822 660 828 680 800M665 790L660 800 690 810 722 800 748 785M700 815L710 840 675 845 655 832M555 825L600 825 612 840 605 870 625 915M605 885L650 885 690 855 720 845 740 855 730 870 745 880 790 900 830 905 860 890 875 895 880 920 900 935 935 935M735 860L705 900 680 905 690 925 668 930M745 890L770 905 808 910 810 900M808 910L805 935M830 910L835 938M860 890L840 920 835 938M880 920L868 945 880 955 905 940 920 975 945 990M870 965L875 955M885 1000L880 980 900 965 915 968 930 990 925 1000 908 1000 905 1005M900 935L900 945M800 720L820 710 870 712 882 694 935 710 975 715 1010 712 1035 742 1005 745 1000 758 960 785 920 790 865 782 850 765 825 755 800 722M1010 712L1032 710 1040 680 1080 680 1090 705 1112 735 1140 732 1135 760 1115 778M1055 800L1080 795 1095 780M1085 822L1098 818"/>
                  <path d="M155 845L158 865 105 905 60 915M78 905V935H47M122 920L130 985H70L55 975M105 903L198 960 205 962 280 932 300 935 345 957M240 835L230 850 240 870 242 912 255 930M350 872V940H435M345 957L342 990 332 1000 335 1025 345 1038 385 1020 420 1020M283 935L282 970 265 1000 280 1015 262 1040 270 1050M198 960V980L160 990 140 1015 125 1018 105 1018 90 1000 75 985M50 1000H75M105 1018L100 1040 115 1055M125 1018L150 1015 155 1050M175 1012L180 1045M190 1005L188 1042M180 1000L230 1005 262 1000M270 1050L335 1025M235 1070H270L300 1060 385 1060 395 1020M270 1070L275 1100 255 1110M300 1060L295 1100 275 1118 255 1118M262 1125H290L300 1135 325 1135 328 1165 325 1198 258 1200M325 1165L350 1170 378 1180 375 1145 385 1130 380 1100 390 1095 385 1070M390 1095L415 1092 455 1120M385 1060L415 1062 440 1055M415 1092L415 1062M395 1130L412 1150 410 1175 385 1190 370 1205 325 1205 322 1230H312V1275L290 1278M320 1260L350 1262 370 1240 395 1220 370 1205M385 1190L405 1195 400 1230 390 1232M412 1150L440 1162 460 1158M422 1190L415 1160M420 1020L420 1005 440 985 455 980M420 1020L415 1040 440 1055 470 1060 510 1045 490 1030M470 1060L465 1098M395 1232L405 1262 392 1268 392 1258M366 1285L372 1278 382 1282 375 1292ZM1185 1103V1140M960 1078L990 1076 1015 1055"/>
                </g>
              </g>
              <g class="pins"><circle cx="2700" cy="1864" r="9"/><circle cx="2645" cy="1976" r="9"/><circle cx="3604" cy="1643" r="9"/><circle cx="3587" cy="1932" r="9"/></g>
            </svg>
          </section>
        </div>
      </div>

      <footer class="foot">
        <button class="btn" type="button" disabled><svg viewBox="0 0 26 26"><path d="M12 3H3q-2 0-2 2v18q0 2 2 2h17q2 0 2-2V13M9 17l1-5L21 1q2-1 3 1t0 3L13 15z"/></svg>Edit Record</button>
        <button class="btn btn-main" type="button"><svg viewBox="0 0 26 26"><path d="M1 16v7q0 2 2 2h20q2 0 2-2v-7M13 19V4"/><path class="fill" d="M6 8l7-8 7 8z"/></svg>Export Record</button>
      </footer>
    </main>
  </div>
</div>
</body>
</html>
```
FILE: styles.css
```css
* { box-sizing: border-box; }
body { margin: 0; background: #1d2330; color: #fff; font-family: Lato, sans-serif; font-size: 26px; letter-spacing: .06em; }
h1, h2, p, ul { margin: 0; padding: 0; font-weight: 400; }
ul { list-style: none; }
a { color: inherit; text-decoration: none; }
button, input, select { font: inherit; letter-spacing: inherit; color: inherit; border: 0; margin: 0; padding: 0; }
svg { display: block; fill: none; stroke: currentColor; }

.app { display: flex; min-height: 100vh; background: #494a4b; }

/* dimmed navigation behind the drawer */
.rail { flex: none; width: 104px; display: flex; flex-direction: column; color: #6f7276; }
.rail-item { display: flex; flex: none; align-items: center; justify-content: center; height: 98px; }
.rail-logo { height: 102px; padding-bottom: 4px; background: #505152; }
.rail-item.rail-active { background: #505254; border-left: 4px solid #4d6667; padding-left: 4px; }
.rail-item:nth-child(2) { height: 104px; padding-top: 4px; }
.rail-icon { width: 30px; height: 38px; stroke-width: 1; }
.rail-icon .wide { stroke-width: 2; }
.rail-icon .dots, .rail-icon .solid { fill: #6b6e72; stroke: none; }
.rail-icon .pulse { stroke: #494a4b; stroke-width: 1; }
.rail-space { flex: 1; }
.rail-item.rail-last { height: 100px; padding-bottom: 4px; background: #4c4d4e; }
.under { flex: none; width: 62px; display: flex; flex-direction: column; border-left: 4px solid #464748; background: #4b4c50; }
.under-top { height: 102px; background: #4f5052; border-bottom: 4px solid #474849; }
.under-bar { height: 126px; margin-top: 2px; border-bottom: 4px solid #474849; }
.under-body { height: 514px; background: #444443; }

.drawer { position: relative; flex: 1; min-width: 0; display: flex; padding-left: 28px; background: #141b21; }
.close { position: absolute; top: 0; left: -64px; width: 64px; height: 82px; background: #141b21; border-radius: 0 0 0 4px; display: flex; align-items: center; justify-content: center; padding-bottom: 14px; padding-left: 16px; }
.close svg { width: 20px; height: 20px; stroke-width: 2; }
.record { flex: 1; min-width: 0; display: flex; flex-direction: column; border-left: 4px solid #0d1117; background: #1d2330; }

.head { display: flex; justify-content: space-between; height: 130px; padding: 0 16px 0 50px; border-bottom: 4px solid #0b0f16; background: linear-gradient(90deg, #232931, #343a47 580px); }
.crumb { padding-top: 14px; font-size: 22px; line-height: 28px; color: #e3e8ef; }
.title { font-size: 48px; line-height: 70px; letter-spacing: .05em; }
.head-tools { display: flex; align-items: flex-end; gap: 6px; }
.plug { width: 32px; height: 32px; margin: 0 34px 20px 0; color: #62ad00; }
.plug .ring { stroke-width: 2; }
.plug .body { fill: currentColor; stroke: none; }
.tool { width: 72px; height: 66px; padding-bottom: 8px; background: #1d2330; border-radius: 4px; display: flex; align-items: center; justify-content: center; }
.tool svg { width: 32px; height: 28px; stroke-width: 2; }
.tool .fill { fill: currentColor; stroke: none; }
.tool .thick { stroke-width: 3; }

.tagbar { display: flex; padding: 8px 34px 18px 86px; background: #343a47; border-bottom: 2px solid #0d1117; }
.tag-area { flex: 1; min-width: 0; padding: 10px 32px 0 0; }
.tags { display: flex; flex-wrap: wrap; gap: 8px; }
.tag { display: flex; align-items: center; gap: 22px; height: 42px; padding: 0 20px 8px 16px; border-radius: 20px; background: #23a6b1; line-height: 32px; white-space: nowrap; }
.tag button { display: flex; padding-top: 4px; background: none; }
.tag svg { width: 18px; height: 18px; stroke-width: 2; }
.add-tag { display: block; width: 186px; height: 42px; margin-top: 8px; padding: 0 20px; font-size: 22px; border-radius: 4px; background: #242a33; }
.add-tag::placeholder { color: #6d7077; opacity: 1; }
.template { flex: none; width: 544px; }
.template-select { appearance: none; width: 100%; height: 60px; padding: 0 22px; font-size: 24px; border: 2px solid #1a202b; background: linear-gradient(45deg, transparent 50%, #fff 50%) right 28px top 26px / 8px 8px no-repeat, linear-gradient(-45deg, transparent 50%, #fff 50%) right 20px top 26px / 8px 8px no-repeat, #2a303d; }

.content { flex: 1; display: flex; overflow: hidden; }
.col { display: flex; flex-direction: column; min-width: 0; }
.col-left { flex: 1832; border-right: 4px solid #0d1117; }
.col-right { flex: 1836; }
.panel { border-bottom: 4px solid #0b1017; }
.panel-head { margin-top: -8px; height: 56px; padding-left: 20px; font-size: 29px; line-height: 34px; letter-spacing: 2px; color: #8791a8; }
.section-title { padding: 27px 40px 0; font-size: 30px; line-height: 36px; letter-spacing: 2px; color: #c3d2e6; }
.field-label { flex: none; font-size: 29px; line-height: 36px; letter-spacing: 2px; color: #8c93a3; }

.summary { height: 664px; border-bottom-width: 2px; }
.summary .panel-head { border-bottom: 2px solid #0d1117; }
.summary-text { padding: 17px 60px 0 30px; line-height: 50px; }
.outbreaks { display: flex; align-items: center; gap: 30px; height: 300px; padding: 0 30px 16px; }
.links { margin-bottom: 8px; font-size: 28px; line-height: 43px; letter-spacing: .065em; color: #23a0aa; }
.cves { display: flex; align-items: center; gap: 24px; height: 194px; padding: 30px 0 0 30px; }
.cves .field-label { padding-bottom: 10px; }
.badges { display: flex; flex-wrap: wrap; gap: 8px; }
.badge { height: 42px; padding: 0 23px 8px 24px; border-radius: 4px; background: #23a6b1; font-size: 22px; line-height: 34px; white-space: nowrap; }

.chain { height: 754px; }
.chain .section-title { margin-bottom: 33px; }
.chain-art { width: 100%; }
.chain-art .outer { fill: #244f57; stroke: none; }
.chain-art .lit { stroke: #86aaa8; stroke-width: 2; }
.chain-art .inner { fill: #32776d; stroke: none; }
.chain-art .dim { fill: #2e6b67; }
.chain-art .glow { fill: #b4cfc8; stroke: none; }
.chain-art .dash { stroke: #83898f; stroke-width: 2; stroke-dasharray: 16 12; }
.art-icon { stroke: #fff; stroke-width: 2; stroke-linejoin: round; }
.art-icon.thin { stroke-width: 1; }
.art-icon .solid { fill: #fff; }
.art-icon .key-text { font-family: "Liberation Sans", Arial, sans-serif; font-size: 11px; font-weight: 700; letter-spacing: 0; fill: #fff; stroke: none; }
.art-label { font-family: "Liberation Sans", Arial, sans-serif; font-size: 37px; letter-spacing: 0; fill: #fff; stroke: none; }

.risk { flex: 1; border-bottom: 0; background: linear-gradient(#1d2330 84%, #1c252f 91%, #131a22); }
.risk-facts { display: grid; grid-template-columns: 1fr 1fr; padding: 59px 28px 0 60px; line-height: 36px; }
.risk-bar { display: flex; margin: 33px 24px 0 60px; border-radius: 6px; overflow: hidden; color: #0b0d0d; font-size: 24px; line-height: 38px; }
.seg { flex: 1; text-align: center; border-bottom: 2px solid rgba(0, 0, 0, .16); }
.trust { background-color: #009e54; }
.low { background-color: #159ab0; }
.moderate { background-color: #c59b00; }
.suspicious { background-color: #d66f05; }
.high { background-color: #ad2a1a; }

.overview { height: 664px; }
.overview-body { display: flex; align-items: flex-start; padding-left: 364px; }
.indicator { display: flex; flex-direction: column; align-items: center; width: 508px; padding-top: 188px; }
.indicator-name { font-size: 44px; line-height: 54px; margin-bottom: 24px; }
.indicator .badge + .badge { margin-top: 22px; }
.rating { margin-left: 194px; padding-top: 62px; text-align: center; }
.gauge { width: 440px; height: 380px; margin-bottom: 34px; }
.gauge path { stroke: none; }
.gauge .needle { fill: #ab0026; }
.gauge .hub { fill: #1d2125; stroke: #262d3a; stroke-width: 8; }
.gauge .score { fill: #b0062c; stroke: none; font-size: 48px; letter-spacing: 0; }
.rating-text { font-size: 31px; line-height: 50px; letter-spacing: 2px; }
.countries { flex: 1; border-bottom: 0; background: linear-gradient(#1d2330 97%, #131a22); }
.countries .section-title { margin-bottom: 13px; }
.map { width: 1760px; max-width: 100%; margin-left: 38px; }
.land { fill: #b8b8b8; stroke: #e2e4e8; }
.land path { stroke-width: 2; vector-effect: non-scaling-stroke; stroke-linejoin: round; }
.land .rough { fill: none; stroke-width: 3; stroke-dasharray: 5 5; }
.water { fill: #1d2330; stroke: #e2e4e8; stroke-width: 1; }
.borders { stroke: #fff; }
.borders path { stroke-width: 1; vector-effect: non-scaling-stroke; stroke-linejoin: round; }
.pins { fill: #f00; stroke: #000; stroke-width: 2; }

.foot { display: flex; justify-content: flex-end; gap: 4px; height: 100px; padding: 20px 54px; border-top: 2px solid #0b1017; background: #1d2330; }
.btn { display: flex; align-items: center; gap: 12px; height: 58px; padding: 0 20px 2px; border-radius: 4px; background: #2b313e; color: #a4a7ad; font-size: 24px; }
.btn svg { width: 26px; height: 26px; stroke-width: 2; }
.btn .fill { fill: currentColor; stroke: none; }
.btn-main { background: #343b48; color: #fff; }
```
